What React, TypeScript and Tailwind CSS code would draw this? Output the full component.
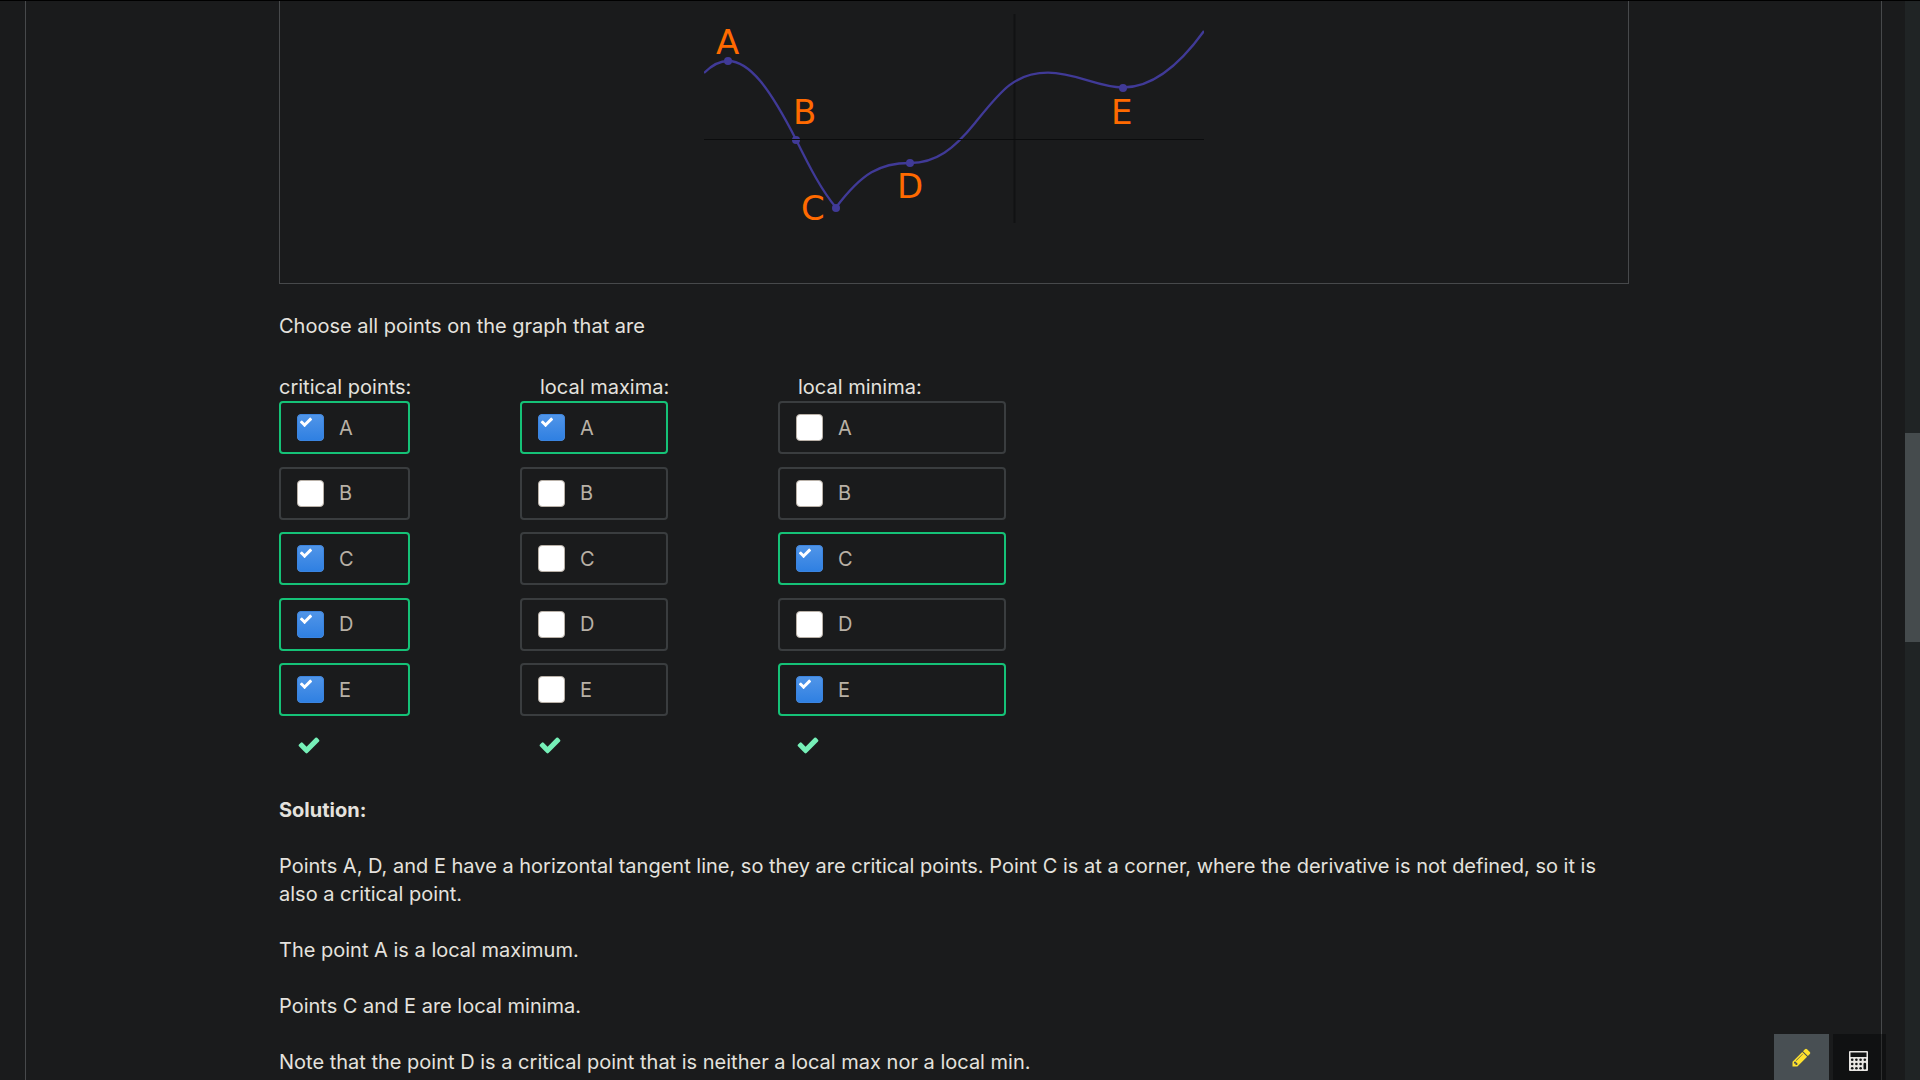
import React, { useState } from "react";

const CHECK_PATH =
  "M1671 566q0 40-28 68l-724 724-136 136q-28 28-68 28t-68-28l-136-136-362-362q-28-28-28-68t28-68l136-136q28-28 68-28t68 28l294 295 656-657q28-28 68-28t68 28l136 136q28 28 28 68z";

function CheckMark({ className }: { className: string }) {
  return (
    <svg viewBox="0 0 1792 1792" fill="currentColor" className={className} aria-hidden="true">
      <path d={CHECK_PATH} />
    </svg>
  );
}

function PencilIcon() {
  return (
    <svg viewBox="0 0 1792 1792" fill="currentColor" className="size-[21px]" aria-hidden="true">
      <path d="M491 1536l91-91-235-235-91 91v107h128v128h107zm523-928q0-22-22-22-10 0-17 7l-542 542q-7 7-7 17 0 22 22 22 10 0 17-7l542-542q7-7 7-17zm-54-192l416 416-832 832h-416v-416zm683 96q0 53-37 90l-166 166-416-416 166-165q36-38 90-38 53 0 91 38l235 234q37 39 37 91z" />
    </svg>
  );
}

function CalculatorIcon() {
  return (
    <svg viewBox="0 0 19 20" className="h-5 w-[19px]" aria-hidden="true">
      <rect width="19" height="20" rx="1" fill="#e8e6e3" />
      <g fill="#111314">
        <rect x="1.5" y="1.5" width="16" height="4.5" />
        <circle cx="3.2" cy="8.7" r="1.3" />
        <circle cx="7.4" cy="8.7" r="1.3" />
        <circle cx="11.6" cy="8.7" r="1.3" />
        <circle cx="15.8" cy="8.7" r="1.3" />
        <circle cx="3.2" cy="13" r="1.3" />
        <circle cx="7.4" cy="13" r="1.3" />
        <circle cx="11.6" cy="13" r="1.3" />
        <circle cx="3.2" cy="17.2" r="1.3" />
        <circle cx="7.4" cy="17.2" r="1.3" />
        <circle cx="11.6" cy="17.2" r="1.3" />
        <rect x="14.5" y="11.8" width="2.6" height="6.7" rx="1.2" />
      </g>
    </svg>
  );
}

const POINTS = [
  { name: "A", cx: 728, cy: 61, x: 716, y: 54 },
  { name: "B", cx: 796, cy: 140, x: 793, y: 124 },
  { name: "C", cx: 836, cy: 208, x: 801, y: 220 },
  { name: "D", cx: 910, cy: 163, x: 897, y: 198 },
  { name: "E", cx: 1123, cy: 88, x: 1111, y: 124 },
];

function Graph() {
  return (
    <svg
      viewBox="704 1 500 242"
      className="h-[242px] w-[500px]"
      role="img"
      aria-label="Graph of a function with the points A to E"
    >
      <path d="M1014.500 14V223" stroke="#111213" strokeWidth="2" />
      <path
        d="M704 73C711 66 719 61 728 61C750 61 770 89 796 139.500C810 168 822 191 836 207.500C862 173 880 163 910 163C936 163 954 149 975 123C1000 92 1014 72.700 1048 72.700C1076 72.700 1098 87.500 1123 87.500C1153 87.500 1181 63 1204 31"
        fill="none"
        stroke="#403a97"
        strokeWidth="2.300"
      />
      {POINTS.map((p) => (
        <circle key={p.name} cx={p.cx} cy={p.cy} r="4" fill="#403a97" />
      ))}
      <path d="M704 139.500H1204" stroke="#0b0c0d" strokeWidth="1" />
      {POINTS.map((p) => (
        <text key={p.name} x={p.x} y={p.y} fill="#ff6a00" fontSize="34" fontFamily="'DejaVu Sans', sans-serif">
          {p.name}
        </text>
      ))}
    </svg>
  );
}

type Column = { title: string; answer: string; width: string; labelPad: string };

const COLUMNS: Column[] = [
  { title: "critical points:", answer: "ACDE", width: "w-[131px]", labelPad: "" },
  { title: "local maxima:", answer: "A", width: "w-[148px]", labelPad: "pl-5" },
  { title: "local minima:", answer: "CE", width: "w-[228px]", labelPad: "pl-5" },
];

function Choice({ name, initial }: { name: string; initial: boolean }) {
  const [checked, setChecked] = useState(initial);
  return (
    <label
      className={
        "flex h-[53px] items-center gap-[15px] rounded border-2 px-4 text-[#b8b1a6] " +
        (initial ? "border-[#15c277]" : "border-[#3a3d3f]")
      }
    >
      <span className="grid size-[27px] shrink-0">
        <input
          type="checkbox"
          checked={checked}
          onChange={() => setChecked(!checked)}
          className="col-start-1 row-start-1 size-[27px] appearance-none rounded border border-[#b9b1a8] bg-white checked:border-[#3a84e0] checked:bg-linear-to-b checked:from-[#5095e8] checked:to-[#2f80e2]"
        />
        {checked && (
          <CheckMark className="pointer-events-none col-start-1 row-start-1 mt-px ml-0.5 size-3.5 text-white" />
        )}
      </span>
      {name}
    </label>
  );
}

function ChoiceColumn({ column }: { column: Column }) {
  return (
    <fieldset className={"min-w-0 shrink-0 " + column.width}>
      <legend className={"whitespace-nowrap " + column.labelPad}>{column.title}</legend>
      <div className="flex h-[315px] flex-col justify-between">
        {["A", "B", "C", "D", "E"].map((name) => (
          <Choice key={name} name={name} initial={column.answer.includes(name)} />
        ))}
      </div>
      <CheckMark className="mt-[17px] ml-[18px] size-6 text-[#76f0b8]" />
    </fieldset>
  );
}

export default function App() {
  return (
    <div className="flex h-screen overflow-hidden border-t border-black bg-[#1a1b1c] font-['Inter',sans-serif] text-[20px] leading-7 text-[#e4e2de]">
      <main className="mr-[23px] ml-[25px] grow border-x border-[#47494b] pr-[252px] pl-[253px]">
        <div className="flex justify-center border-x border-b border-[#47494b] pb-10">
          <Graph />
        </div>
        <p className="mt-7">Choose all points on the graph that are</p>
        <form className="mt-[33px] flex gap-[110px]">
          {COLUMNS.map((column) => (
            <ChoiceColumn key={column.title} column={column} />
          ))}
        </form>
        <section className="mt-[39px] space-y-7">
          <h2 className="font-bold">Solution:</h2>
          <p>
            Points A, D, and E have a horizontal tangent line, so they are critical points. Point C is at a corner,
            where the derivative is not defined, so it is also a critical point.
          </p>
          <p>The point A is a local maximum.</p>
          <p>Points C and E are local minima.</p>
          <p>Note that the point D is a critical point that is neither a local max nor a local min.</p>
        </section>
      </main>
      <div className="w-[15px] shrink-0 bg-[#202425] pt-[432px]">
        <div className="h-[209px] bg-[#454b4d]" />
      </div>
      <div className="fixed right-[34px] bottom-0 flex gap-1">
        <button
          type="button"
          aria-label="Pencil"
          className="flex h-[46px] w-[55px] items-center justify-center bg-[#484f53] text-[#ffe22e]"
        >
          <PencilIcon />
        </button>
        <button
          type="button"
          aria-label="Calculator"
          className="flex h-[46px] w-[53px] items-start bg-black/35 pt-[17px] pl-4"
        >
          <CalculatorIcon />
        </button>
      </div>
    </div>
  );
}
